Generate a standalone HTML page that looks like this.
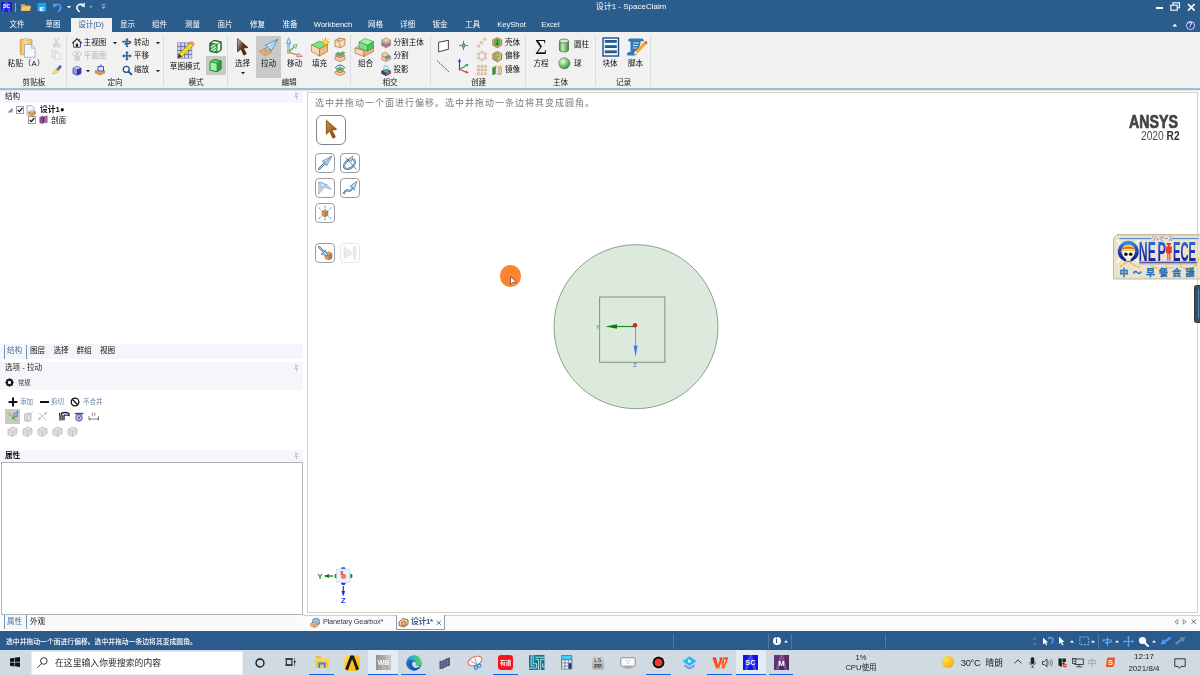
<!DOCTYPE html>
<html lang="zh-CN"><head><meta charset="utf-8"><title>设计1 - SpaceClaim</title>
<style>
*{margin:0;padding:0;box-sizing:border-box}
html,body{width:1200px;height:675px;overflow:hidden;background:#fff}
body{position:relative;font-family:"Liberation Sans","Noto Sans CJK SC",sans-serif;font-size:7.6px;color:#111}
.a{position:absolute}
.t{position:absolute;white-space:nowrap;line-height:10px;height:10px;font-size:7.6px}
.w{color:#fff}
.c{text-align:center}
.g{color:#9a9a9a}
svg{position:absolute;overflow:visible}
#root{position:absolute;left:0;top:0;width:1200px;height:675px;overflow:hidden;will-change:transform;background:#fff}
</style></head><body><div id="root">
<div class="a" style="left:0px;top:0px;width:1200px;height:32.3px;background:#2a5c8c"></div>
<div class="a" style="left:1.3px;top:1.5px;width:10.4px;height:10.2px;background:#1a1ae0"></div>
<svg style="left:1.3px;top:1.5px" width="10.4" height="10.2" viewBox="0 0 10.4 10.2"><path d="M4 0h2.400l3.500 10.200h-2.200l-2.500-7l-2.500 7h-2.200z" fill="#5a6af8" opacity="0.700"/></svg>
<div class="t w c" style="left:1.3px;top:2.2px;width:10.4px;font-size:5.6px;font-weight:bold;line-height:9px;letter-spacing:-0.2px">SC</div>
<div class="a" style="left:15px;top:3px;width:1px;height:9px;background:#8aa3bf"></div>
<svg style="left:20px;top:2px" width="12" height="10" viewBox="0 0 12 10"><path d="M1 2.2h3.5l1 1.2h4.8v5.4h-9.3z" fill="#e9a23b"/><path d="M1 8.8l1.6-4.3h8.6l-1.8 4.3z" fill="#fbc566"/></svg>
<svg style="left:37px;top:2px" width="10" height="10" viewBox="0 0 10 10"><rect x="0.5" y="0.8" width="8.6" height="8.4" fill="#1ea1ea"/><rect x="2.6" y="5.2" width="4.6" height="4" fill="#e8f4fc"/><rect x="5.3" y="6" width="1.3" height="2.6" fill="#1ea1ea"/></svg>
<svg style="left:52px;top:2px" width="11" height="10" viewBox="0 0 11 10"><path d="M2.2 3.2c2.4-1.6 5.6-1.2 6.4 1.6c0.5 2-0.6 3.5-2.2 4.6" fill="none" stroke="#4f9df0" stroke-width="1.7" stroke-linecap="round"/><path d="M1 1l0.4 4.6l4-1.6z" fill="#4f9df0"/></svg>
<svg style="left:66.5px;top:6px" width="4" height="3" viewBox="0 0 4 3"><path d="M0 0h4l-2 2.4z" fill="#fff"/></svg>
<svg style="left:75px;top:2px" width="11" height="10" viewBox="0 0 11 10"><path d="M8.4 3.2c-2.2-1.7-5.6-1.2-6.4 1.6c-0.5 2 0.6 3.5 2.2 4.6" fill="none" stroke="#e6edf5" stroke-width="1.7" stroke-linecap="round"/><path d="M10 0.6l-0.4 4.8l-4.2-1.6z" fill="#e6edf5"/></svg>
<svg style="left:88.5px;top:6px" width="4" height="3" viewBox="0 0 4 3"><path d="M0 0h4l-2 2.4z" fill="#7f9bb8"/></svg>
<svg style="left:100.5px;top:4px" width="5" height="6" viewBox="0 0 5 6"><path d="M0.4 0.6h4.2" stroke="#9fb5cc" stroke-width="0.9"/><path d="M0.2 2.4h4.6l-2.3 2.6z" fill="#9fb5cc"/></svg>
<div class="t c w" style="left:531.0px;top:2px;width:200px;font-size:8px">设计1 - SpaceClaim</div>
<div class="a" style="left:1156px;top:7px;width:7px;height:1.6px;background:#fff"></div>
<svg style="left:1170px;top:2px" width="11" height="10" viewBox="0 0 11 10"><rect x="3" y="0.8" width="6.4" height="5" fill="none" stroke="#fff" stroke-width="1.1"/><rect x="0.8" y="3.2" width="6.4" height="5" fill="#2b5b8c" stroke="#fff" stroke-width="1.1"/></svg>
<svg style="left:1187px;top:2.5px" width="9" height="9" viewBox="0 0 9 9"><path d="M1 1l6.6 6.6M7.6 1L1 7.6" stroke="#fff" stroke-width="1.6"/></svg>
<svg style="left:1172px;top:23px" width="6" height="4" viewBox="0 0 6 4"><path d="M0.4 3.4l2.4-2.6l2.4 2.6z" fill="#fff"/></svg>
<div class="a" style="left:1186px;top:20.5px;width:9px;height:9px;background:#2a3fa8;border-radius:50%;border:0.8px solid #dfe6f2"></div>
<div class="t w c" style="left:1186px;top:20px;width:9px;font-size:7px;font-weight:bold">?</div>
<div class="a" style="left:71px;top:18px;width:41px;height:14px;background:#f1f1f1"></div>
<div class="t c w" style="left:-23.0px;top:19.5px;width:80px;">文件</div>
<div class="t c w" style="left:13.0px;top:19.5px;width:80px;">草图</div>
<div class="t c " style="left:51.0px;top:19.5px;width:80px;color:#2b5b8c">设计(D)</div>
<div class="t c w" style="left:87.5px;top:19.5px;width:80px;">显示</div>
<div class="t c w" style="left:119.5px;top:19.5px;width:80px;">组件</div>
<div class="t c w" style="left:152.5px;top:19.5px;width:80px;">测量</div>
<div class="t c w" style="left:185.0px;top:19.5px;width:80px;">面片</div>
<div class="t c w" style="left:217.5px;top:19.5px;width:80px;">修复</div>
<div class="t c w" style="left:250.0px;top:19.5px;width:80px;">准备</div>
<div class="t c w" style="left:293.0px;top:19.5px;width:80px;">Workbench</div>
<div class="t c w" style="left:335.5px;top:19.5px;width:80px;">网格</div>
<div class="t c w" style="left:367.5px;top:19.5px;width:80px;">详细</div>
<div class="t c w" style="left:400.0px;top:19.5px;width:80px;">钣金</div>
<div class="t c w" style="left:432.5px;top:19.5px;width:80px;">工具</div>
<div class="t c w" style="left:471.5px;top:19.5px;width:80px;">KeyShot</div>
<div class="t c w" style="left:510.5px;top:19.5px;width:80px;">Excel</div>
<div class="a" style="left:0px;top:32px;width:1200px;height:56px;background:#f1f1f1"></div>
<div class="a" style="left:0px;top:87.5px;width:1200px;height:0.8px;background:#d3dbe3"></div>
<div class="a" style="left:0px;top:88.3px;width:1200px;height:1.4px;background:#a7bccd"></div>
<div class="a" style="left:0px;top:89.7px;width:1200px;height:0.8px;background:#dfe5ec"></div>
<div class="a" style="left:65.5px;top:35px;width:1px;height:51px;background:#dcdcdc"></div>
<div class="a" style="left:163.3px;top:35px;width:1px;height:51px;background:#dcdcdc"></div>
<div class="a" style="left:227.4px;top:35px;width:1px;height:51px;background:#dcdcdc"></div>
<div class="a" style="left:349.5px;top:35px;width:1px;height:51px;background:#dcdcdc"></div>
<div class="a" style="left:429.5px;top:35px;width:1px;height:51px;background:#dcdcdc"></div>
<div class="a" style="left:524.5px;top:35px;width:1px;height:51px;background:#dcdcdc"></div>
<div class="a" style="left:594.5px;top:35px;width:1px;height:51px;background:#dcdcdc"></div>
<div class="a" style="left:649.5px;top:35px;width:1px;height:51px;background:#dcdcdc"></div>
<div class="t c " style="left:-6.0px;top:78px;width:80px;color:#222">剪贴板</div>
<div class="t c " style="left:75.0px;top:78px;width:80px;color:#222">定向</div>
<div class="t c " style="left:156.0px;top:78px;width:80px;color:#222">模式</div>
<div class="t c " style="left:249.0px;top:78px;width:80px;color:#222">编辑</div>
<div class="t c " style="left:350.0px;top:78px;width:80px;color:#222">相交</div>
<div class="t c " style="left:438.5px;top:78px;width:80px;color:#222">创建</div>
<div class="t c " style="left:520.5px;top:78px;width:80px;color:#222">主体</div>
<div class="t c " style="left:583.5px;top:78px;width:80px;color:#222">记录</div>
<svg style="left:19px;top:36.5px" width="18" height="21" viewBox="0 0 18 21"><defs><linearGradient id="clp" x1="0" y1="0" x2="1" y2="0"><stop offset="0" stop-color="#e8b040"/><stop offset="0.400" stop-color="#fbe08a"/><stop offset="1" stop-color="#f0c058"/></linearGradient></defs>
<rect x="1.200" y="2.300" width="11.800" height="15.500" rx="1" fill="url(#clp)" stroke="#c99a3c" stroke-width="0.700"/>
<path d="M4 3q3-4.600 6.200 0z" fill="#e4e4e4" stroke="#a8a8a8" stroke-width="0.500"/>
<path d="M5.500 7.500h6.800l3.800 3.800v9h-10.600z" fill="#f6f6fc" stroke="#a0a3c4" stroke-width="0.800"/>
<path d="M12.300 7.500v3.800h3.800" fill="#dcdcec" stroke="#a0a3c4" stroke-width="0.600"/></svg>
<div class="t c " style="left:-13.7px;top:59.3px;width:80px;letter-spacing:0.45px">粘贴（A）</div>
<svg style="left:52px;top:37px" width="9" height="11" viewBox="0 0 9 11"><path d="M2.200 1l3.6 6.200M6.800 1l-3.600 6.200" stroke="#bdbdbd" stroke-width="0.9" fill="none"/><circle cx="2.600" cy="8.600" r="1.400" fill="none" stroke="#bdbdbd" stroke-width="0.9"/><circle cx="6.400" cy="8.600" r="1.400" fill="none" stroke="#bdbdbd" stroke-width="0.9"/></svg>
<svg style="left:51px;top:50px" width="11" height="10" viewBox="0 0 11 10"><path d="M1 0.800h4l1.600 1.600v5h-5.600z" fill="#ededed" stroke="#cfcfcf" stroke-width="0.7"/><path d="M4 2.800h4l1.600 1.600v5h-5.600z" fill="#f4f4f4" stroke="#cfcfcf" stroke-width="0.7"/></svg>
<svg style="left:51px;top:64px" width="11" height="11" viewBox="0 0 11 11"><path d="M9 1.200l1.600 1.400l-2.600 3.400l-2-1.600z" fill="#5a5fc0" stroke="#3a3f90" stroke-width="0.400"/><path d="M5.800 4.200l2.400 2l-0.900 1.100l-2.500-2z" fill="#8a8a8a"/><path d="M4.600 5.200l2.800 2.300q-2 3.300-6.800 2q2.600-1.200 4-4.300z" fill="#f4de58" stroke="#c9a83a" stroke-width="0.400"/></svg>
<svg style="left:72px;top:38px" width="10" height="10" viewBox="0 0 10 10"><path d="M1.600 5v4.200h6.800v-4.200" fill="#fff" stroke="#4038a8" stroke-width="1"/><path d="M0.300 5.300l4.700-4.500l4.700 4.500" fill="none" stroke="#3d2a1a" stroke-width="1.300"/><rect x="3.800" y="5.600" width="2.400" height="3.200" fill="#222"/><rect x="7" y="1" width="1.200" height="2.400" fill="#c0392b"/></svg>
<div class="t " style="left:83.6px;top:37.5px;">主视图</div>
<svg style="left:112.5px;top:42px" width="4" height="3" viewBox="0 0 4 3"><path d="M0 0h4l-2 2.3z" fill="#222"/></svg>
<svg style="left:72px;top:51px" width="10" height="10" viewBox="0 0 10 10"><ellipse cx="5" cy="3" rx="4.400" ry="2.200" fill="none" stroke="#c4c4c4" stroke-width="0.9"/><circle cx="5" cy="3" r="1.200" fill="#c4c4c4"/><path d="M2.500 6h5.500M2.500 7.600h5.500M2.500 9.200h5.500" stroke="#c4c4c4" stroke-width="1"/></svg>
<div class="t " style="left:83.6px;top:51.3px;color:#b4b4b4">平面图</div>
<svg style="left:72px;top:65px" width="10" height="11" viewBox="0 0 10 11"><path d="M1 3l4-1.800l4 1.800v5.500l-4 1.800l-4-1.800z" fill="#7a80e8" stroke="#23236e" stroke-width="0.600"/><path d="M1 3l4 1.600l4-1.600l-4-1.800z" fill="#b4b8f8"/><path d="M5 4.600v5.700l4-1.800v-5.500z" fill="#3434a8"/><path d="M1.800 4.200v4l2.400 1.100v-4z" fill="#a4a8f8" opacity="0.700"/></svg>
<svg style="left:85.5px;top:69.5px" width="4" height="3" viewBox="0 0 4 3"><path d="M0 0h4l-2 2.3z" fill="#222"/></svg>
<svg style="left:94px;top:64px" width="12" height="12" viewBox="0 0 12 12"><path d="M1 7l5-2l5 2l-5 2.400z" fill="#f0b873" stroke="#b87a3a" stroke-width="0.5"/><path d="M1 7v1.800l5 2.400l5-2.400v-1.800l-5 2.400z" fill="#d99a55" stroke="#b87a3a" stroke-width="0.5"/><path d="M4 2.500h5.500v4.500h-5.500z" fill="#dbe6ff" stroke="#3446b0" stroke-width="0.9"/><path d="M6.800 0.500v2" stroke="#3446b0" stroke-width="0.9"/></svg>
<svg style="left:122px;top:38px" width="10" height="9.5" viewBox="0 0 12 12" preserveAspectRatio="none"><path d="M6 0.800v10.400" stroke="#1f5a92" stroke-width="1.500"/><path d="M1.600 5.200c0-1.600 8.800-1.600 8.800 0.300c0 1.500-4 2-6.200 1.300" fill="none" stroke="#1f5a92" stroke-width="1.700"/><path d="M0 3.400l3.400 0.400l-2 2.800z" fill="#1f5a92"/><path d="M4 5l2 3.800l-3.300-0.600z" fill="#1f5a92"/><path d="M6 0l1.800 2.300h-3.600zM6 12l1.800-2.300h-3.600z" fill="#1f5a92"/></svg>
<div class="t " style="left:134px;top:37.5px;">转动</div>
<svg style="left:155.5px;top:42px" width="4" height="3" viewBox="0 0 4 3"><path d="M0 0h4l-2 2.3z" fill="#222"/></svg>
<svg style="left:122px;top:51.3px" width="9.8" height="9.8" viewBox="0 0 12 12" preserveAspectRatio="none"><path d="M6 1.500v9M1.500 6h9" stroke="#1f5a92" stroke-width="1.700"/><path d="M6 0l2.200 2.800h-4.400zM6 12l2.200-2.800h-4.400zM0 6l2.800-2.200v4.400zM12 6l-2.800-2.200v4.400z" fill="#1f5a92"/></svg>
<div class="t " style="left:134px;top:51.3px;">平移</div>
<svg style="left:121.5px;top:64.8px" width="10.3" height="10.3" viewBox="0 0 12 12" preserveAspectRatio="none"><circle cx="5" cy="5" r="3.500" fill="#fdfdfd" stroke="#1f4f86" stroke-width="1.500"/><path d="M7.600 7.600l3.400 3.400" stroke="#1f4f86" stroke-width="2.100" stroke-linecap="round"/></svg>
<div class="t " style="left:134px;top:64.5px;">缩放</div>
<svg style="left:155.5px;top:69.5px" width="4" height="3" viewBox="0 0 4 3"><path d="M0 0h4l-2 2.3z" fill="#222"/></svg>
<svg style="left:175px;top:40px" width="21" height="20" viewBox="0 0 21 20"><rect x="2.300" y="2.800" width="14.600" height="15.400" fill="#d4d4ea" stroke="#6a6a9a" stroke-width="0.500"/>
<path d="M2.300 6.600h14.600M2.300 10.500h14.600M2.300 14.400h14.600M5.900 2.800v15.400M9.600 2.800v15.400M13.300 2.800v15.400" stroke="#5a5a90" stroke-width="0.800"/>
<path d="M2.700 17.900l1.500-4.200l11-11l2.900 2.900l-11 11z" fill="#f5e420" stroke="#7a6a10" stroke-width="0.600"/>
<path d="M5.500 14.800l9.700-9.700" stroke="#c8b818" stroke-width="0.700"/>
<path d="M15.200 2.700l1.200-1.200q2.200 0.200 2.900 2.900l-1.200 1.200z" fill="#f4a890" stroke="#9a5a4a" stroke-width="0.500"/>
<path d="M2.700 17.900l1.500-4.200l2.700 2.700z" fill="#3a2a1a"/></svg>
<div class="t c " style="left:145.0px;top:61.5px;width:80px;">草图模式</div>
<div class="a" style="left:206px;top:55.5px;width:20px;height:19px;background:#c9c9c9"></div>
<svg style="left:209px;top:38.5px" width="13" height="15" viewBox="0 0 13 15"><path d="M1 4l4-2.500l7 1.300v8.400l-4 2.500l-7-1.400z" fill="#f4fff4" stroke="#156a25" stroke-width="1"/><path d="M1 4l7 1.300v8.400l-7-1.400z" fill="#2f9f3f"/><path d="M1.500 8.500l5.500-3.500M1.500 11.500l6-4M3.500 12.800l4.500-3" stroke="#e4ffe4" stroke-width="1.100"/><path d="M1 4l7 1.300l4-2.500M8 5.300v8.400" fill="none" stroke="#156a25" stroke-width="0.900"/><path d="M1 4l4-2.500l7 1.300v8.400l-4 2.500l-7-1.400z" fill="none" stroke="#156a25" stroke-width="1"/></svg>
<svg style="left:209px;top:57.5px" width="13" height="15" viewBox="0 0 13 15"><path d="M1 4l4-2.500l7 1.300v8.400l-4 2.500l-7-1.400z" fill="#a4f2aa" stroke="#1d8a2d" stroke-width="1"/><path d="M1 4l7 1.300l4-2.500l-7-1.300z" fill="#5ccf66" stroke="#1d8a2d" stroke-width="0.700"/><path d="M8 5.300v8.400l4-2.500v-8.400z" fill="#2fa040" stroke="#1d8a2d" stroke-width="0.700"/></svg>
<svg style="left:235px;top:37px" width="15" height="19" viewBox="0 0 15 19"><defs><linearGradient id="sa" x1="0" y1="0" x2="1" y2="1"><stop offset="0" stop-color="#d8ccc4"/><stop offset="0.450" stop-color="#6a3a24"/><stop offset="1" stop-color="#2a1006"/></linearGradient></defs><path d="M2.500 1.500l10.500 9l-4.600 0.600l2.900 5.800l-2.500 1.200l-2.800-6l-3.500 2.900z" fill="url(#sa)" stroke="#2a1408" stroke-width="0.600" stroke-linejoin="round"/></svg>
<div class="t c " style="left:202.5px;top:59.3px;width:80px;">选择</div>
<svg style="left:240.5px;top:72px" width="4" height="3" viewBox="0 0 4 3"><path d="M0 0h4l-2 2.3z" fill="#222"/></svg>
<div class="a" style="left:256px;top:35.7px;width:25px;height:41.9px;background:#c9c9c9"></div>
<svg style="left:258px;top:37px" width="21" height="20" viewBox="0 0 21 20"><path d="M1 14.300l7-3.700l6 4.200l-7.300 4.200z" fill="#eaa868" stroke="#c08040" stroke-width="0.500"/>
<path d="M19.800 2.300l-6.500 11.500l-1.800-2.600l-3.300 3.300l-1.400-1.400l3.300-3.300l-2.700-1.600z" fill="#c4e4f8" stroke="#2f7ab8" stroke-width="0.700" stroke-linejoin="round"/><path d="M19.800 2.300l-9 8.500" stroke="#4a9ad8" stroke-width="0.600"/></svg>
<div class="t c " style="left:228.5px;top:59.3px;width:80px;">拉动</div>
<svg style="left:284px;top:37px" width="20" height="20" viewBox="0 0 20 20"><path d="M4.600 15v-9" stroke="#2f86c0" stroke-width="2"/><path d="M4.600 15v-9" stroke="#c4e4f8" stroke-width="0.900"/><path d="M4.600 0.800l2.400 5.700h-4.800z" fill="#c4e4f8" stroke="#2f86c0" stroke-width="0.600"/>
<path d="M4.600 15l5.500-4.800" stroke="#3a9a5a" stroke-width="1.100"/><path d="M13 7.500l-1.300 4l-3-3.200z" fill="#c8f0d0" stroke="#2f8a4a" stroke-width="0.600"/>
<path d="M4.600 15.300l8.500 2.500" stroke="#d0505a" stroke-width="1"/><path d="M18.300 19.300l-5.500 0.600l1.200-3.600z" fill="#f8d8d8" stroke="#c0404a" stroke-width="0.600"/>
<circle cx="4.600" cy="15.300" r="1.400" fill="#f0d040" stroke="#a08020" stroke-width="0.500"/></svg>
<div class="t c " style="left:254.5px;top:59.3px;width:80px;">移动</div>
<svg style="left:310px;top:36px" width="21" height="21" viewBox="0 0 21 21"><path d="M1.500 9l8-4l8 3.500l-8 4.500z" fill="#7fe08a" stroke="#2f9a45" stroke-width="0.600"/>
<path d="M1.500 9v6.500l8 4.500v-7z" fill="#f7d9b5" stroke="#a8703a" stroke-width="0.700"/>
<path d="M9.500 13v7l8-4.500v-7z" fill="#eeb987" stroke="#a8703a" stroke-width="0.700"/>
<circle cx="15.500" cy="6" r="2.600" fill="#ffd21a"/>
<path d="M15.500 1.500v9M11 6h9M12.300 2.800l6.400 6.400M18.700 2.800l-6.400 6.400" stroke="#f39a12" stroke-width="0.900"/><circle cx="15.500" cy="6" r="2" fill="#ffdd33"/></svg>
<div class="t c " style="left:279.5px;top:59.3px;width:80px;">填充</div>
<svg style="left:334px;top:37px" width="12" height="11" viewBox="0 0 12 11"><path d="M1 3.500l4-2.500l6 1v6l-4 2.500l-6-1z" fill="#f7dcb9" stroke="#b07a45" stroke-width="0.800"/><path d="M5 1q-1.500 4 2 9.500M1 3.500q4 2 10-1.500" fill="none" stroke="#b07a45" stroke-width="0.700"/></svg>
<svg style="left:334px;top:50.5px" width="12" height="11" viewBox="0 0 12 11"><path d="M1 6l5-2l5 2v2.500l-5 2.300l-5-2.300z" fill="#f0c79a" stroke="#a8703a" stroke-width="0.600"/><path d="M1 4.500l5-2l5 2l-5 2.200z" fill="#e88a9a" stroke="#b0505a" stroke-width="0.500"/><path d="M1.500 2.800l3-1.600l2 1l2.500-1.500l2 1.300l-5 2.500z" fill="#4cc25a" stroke="#2a8a3a" stroke-width="0.500"/></svg>
<svg style="left:334px;top:64px" width="12" height="12" viewBox="0 0 12 12"><path d="M1 7.500l5-2l5 2v2l-5 2.300l-5-2.300z" fill="#f0c79a" stroke="#a8703a" stroke-width="0.600"/><path d="M2 5l4-2l4 2l-4 1.800z" fill="#4cc25a" stroke="#2a8a3a" stroke-width="0.500"/><path d="M1 4q5-6 10 0" fill="none" stroke="#3a58c0" stroke-width="1"/><path d="M2 7l4 1.600l4-1.600" fill="none" stroke="#d05060" stroke-width="0.800"/></svg>
<svg style="left:354px;top:37px" width="22" height="21" viewBox="0 0 22 21"><path d="M1 11l6-3l9 2l-6 3.500z" fill="#f7dcb9" stroke="#a8703a" stroke-width="0.600"/><path d="M1 11v5l9 3.500v-6z" fill="#f7d9b5" stroke="#a8703a" stroke-width="0.700"/><path d="M10 13.500v6l9.500-5v-5.500z" fill="#e8b582" stroke="#a8703a" stroke-width="0.700"/>
<path d="M5 5l6-3.500l8.500 3l-6 3.500z" fill="#a6f0ae" stroke="#2f9a45" stroke-width="0.600"/><path d="M5 5v6l8.500 3v-5.500z" fill="#7fe08a" stroke="#2f9a45" stroke-width="0.700"/><path d="M13.500 8.500v5.500l6-3.500v-6z" fill="#4cc25a" stroke="#2f9a45" stroke-width="0.700"/></svg>
<div class="t c " style="left:325.5px;top:59.3px;width:80px;">组合</div>
<svg style="left:381.2px;top:37px" width="10.3" height="11" viewBox="0 0 12 11" preserveAspectRatio="none"><path d="M0.800 7l5-2l5.400 2v1.500l-5.400 2.300l-5-2.300z" fill="#e86a6a" stroke="#8a5a5a" stroke-width="0.500"/><path d="M0.800 5l5-2l5.400 2v1.500l-5.400 2.200l-5-2.200z" fill="#5aa8e8" stroke="#4a6a9a" stroke-width="0.500"/><path d="M0.800 3l5-2.200l5.400 2.200v1.500l-5.400 2.200l-5-2.200z" fill="#f5cfa0" stroke="#a8703a" stroke-width="0.600"/><path d="M0.800 3l5 2.200l5.400-2.200" fill="none" stroke="#a8703a" stroke-width="0.500"/></svg>
<div class="t " style="left:393.5px;top:37.5px;">分割主体</div>
<svg style="left:381.2px;top:50.5px" width="10.3" height="11" viewBox="0 0 12 11" preserveAspectRatio="none"><path d="M0.800 6l5-1.500l5.400 2v2l-5.400 2.200l-5-2.200z" fill="#f0c79a" stroke="#a8703a" stroke-width="0.600"/><path d="M1.500 4.500l4-1.300l5 1.800l-4.500 2z" fill="#4cc25a" stroke="#2a8a3a" stroke-width="0.500"/><path d="M5.500 7l5.500-2.200v1.800l-5.500 2.200z" fill="#5aa8e8" stroke="#3a68a8" stroke-width="0.400"/><path d="M1 3l3.500-1.800l3.500 1.300v2l-3.500 1.500l-3.500-1.300z" fill="#f5cfa0" stroke="#a8703a" stroke-width="0.600"/></svg>
<div class="t " style="left:393.5px;top:51px;">分割</div>
<svg style="left:381.2px;top:64px" width="10.3" height="12" viewBox="0 0 12 12" preserveAspectRatio="none"><path d="M0.800 7l5-2l5.400 2v2.500l-5.400 2.200l-5-2.200z" fill="#3a3a8a" stroke="#22225a" stroke-width="0.600"/><path d="M2.200 7l3.600-1.400l4 1.400l-4 1.700z" fill="#4cc25a"/><path d="M5.800 8.700v2.800l5.400-2.200v-2.300z" fill="#c86a8a" opacity="0.700"/><path d="M3 5.500l1-4l3 0.500l2 3" fill="#e8f2fc" stroke="#5a9ad8" stroke-width="0.700"/></svg>
<div class="t " style="left:393.5px;top:64.5px;">投影</div>
<svg style="left:437px;top:39px" width="13" height="14" viewBox="0 0 13 14"><path d="M1.600 3.300l9.800-2v9l-9.800 2.500z" fill="#fff" stroke="#333" stroke-width="0.900"/></svg>
<svg style="left:436px;top:59px" width="14" height="14" viewBox="0 0 14 14"><path d="M1 1.500l12 11.500" stroke="#333" stroke-width="0.950" stroke-dasharray="1.600 1"/></svg>
<svg style="left:458px;top:40px" width="11" height="11" viewBox="0 0 11 11"><path d="M5.500 0.800v2.200M5.500 8v2.200M1 5.500h2.200M7.800 5.500h2.200" stroke="#2a8a3a" stroke-width="0.900"/><rect x="4.200" y="3.800" width="2.600" height="3.400" rx="0.700" fill="#7fd07a" stroke="#1d5a2d" stroke-width="0.800"/></svg>
<svg style="left:456px;top:58px" width="14" height="16" viewBox="0 0 14 16"><path d="M3.500 11.500v-9" stroke="#2a3ad8" stroke-width="1.100"/><path d="M3.500 0.500l1.700 3.200h-3.400z" fill="#2a3ad8"/><path d="M3.500 11.500l7-4.300" stroke="#2aa070" stroke-width="1.100"/><path d="M12.500 5.800l-1.300 3.200l-2.200-2.600z" fill="#2aa070"/><path d="M3.500 11.500l7 2.700" stroke="#e03a3a" stroke-width="1.100"/><path d="M12.800 15l-3.500 0.300l1-2.900z" fill="#e03a3a"/><circle cx="3.500" cy="11.500" r="1" fill="#c85a3a"/></svg>
<svg style="left:475px;top:37px" width="13" height="12" viewBox="0 0 13 12"><circle cx="3.6" cy="9.1" r="1.150" fill="#f8e0c4" stroke="#b88858" stroke-width="0.550"/><circle cx="6.5" cy="5.7" r="1.150" fill="#f8e0c4" stroke="#b88858" stroke-width="0.550"/><circle cx="9.7" cy="2.3" r="1.150" fill="#f8e0c4" stroke="#b88858" stroke-width="0.550"/></svg>
<svg style="left:475px;top:50.5px" width="13" height="12" viewBox="0 0 13 12"><circle cx="7" cy="1.2" r="1.150" fill="#f8e0c4" stroke="#b88858" stroke-width="0.550"/><circle cx="10.3" cy="3.1" r="1.150" fill="#f8e0c4" stroke="#b88858" stroke-width="0.550"/><circle cx="10.3" cy="6.9" r="1.150" fill="#f8e0c4" stroke="#b88858" stroke-width="0.550"/><circle cx="7" cy="8.8" r="1.150" fill="#f8e0c4" stroke="#b88858" stroke-width="0.550"/><circle cx="3.6" cy="6.9" r="1.150" fill="#f8e0c4" stroke="#b88858" stroke-width="0.550"/><circle cx="3.6" cy="3.1" r="1.150" fill="#f8e0c4" stroke="#b88858" stroke-width="0.550"/></svg>
<svg style="left:475px;top:64px" width="13" height="12" viewBox="0 0 13 12"><circle cx="3.5" cy="2.5" r="1.150" fill="#f8e0c4" stroke="#b88858" stroke-width="0.550"/><circle cx="7" cy="2.5" r="1.150" fill="#f8e0c4" stroke="#b88858" stroke-width="0.550"/><circle cx="10.5" cy="2.5" r="1.150" fill="#f8e0c4" stroke="#b88858" stroke-width="0.550"/><circle cx="3.5" cy="6" r="1.150" fill="#f8e0c4" stroke="#b88858" stroke-width="0.550"/><circle cx="7" cy="6" r="1.150" fill="#f8e0c4" stroke="#b88858" stroke-width="0.550"/><circle cx="10.5" cy="6" r="1.150" fill="#f8e0c4" stroke="#b88858" stroke-width="0.550"/><circle cx="3.5" cy="9.7" r="1.150" fill="#f8e0c4" stroke="#b88858" stroke-width="0.550"/><circle cx="7" cy="9.7" r="1.150" fill="#f8e0c4" stroke="#b88858" stroke-width="0.550"/><circle cx="10.5" cy="9.7" r="1.150" fill="#f8e0c4" stroke="#b88858" stroke-width="0.550"/></svg>
<svg style="left:492.3px;top:37px" width="10.5" height="11.5" viewBox="0 0 12 12" preserveAspectRatio="none"><path d="M1 3l5-2.300l5 2.300v5.500l-5 2.700l-5-2.700z" fill="#f0c79a" stroke="#8a5a2a" stroke-width="0.900"/><path d="M3 3.600l3-1.300l3 1.300v4.200l-3 1.700l-3-1.700z" fill="#5cc25a" stroke="#2a7a2a" stroke-width="0.700"/><path d="M6 3v5M4.600 6.400l1.400 1.800l1.400-1.800" stroke="#0a4a1a" stroke-width="0.800" fill="none"/></svg>
<div class="t " style="left:505px;top:37.5px;">壳体</div>
<svg style="left:492.3px;top:50.5px" width="10.5" height="11.5" viewBox="0 0 12 12" preserveAspectRatio="none"><path d="M1 3l5-2.300l5 2.300v5.500l-5 2.700l-5-2.700z" fill="#e8b582" stroke="#8a5a2a" stroke-width="0.900"/><path d="M3.200 3.800l5.500-1.600v3l-2.800 1v2.800l-2.700-1z" fill="#8ad07a" stroke="#4a7a3a" stroke-width="0.600"/><path d="M9 1l0.700 1.500l1.600 0.200l-1.200 1.100l0.300 1.600l-1.400-0.800l-1.400 0.800l0.300-1.600l-1.200-1.100l1.600-0.200z" fill="#ffb81a"/></svg>
<div class="t " style="left:505px;top:51px;">偏移</div>
<svg style="left:492.3px;top:64px" width="10.5" height="11.5" viewBox="0 0 12 12" preserveAspectRatio="none"><path d="M0.800 4l3.500-1.500v7.500l-3.500 1.200z" fill="#3f9a3a" stroke="#1f6a2a" stroke-width="0.600"/><path d="M4.300 2.500l3 1v7.300l-3-0.800z" fill="#eee" stroke="#888" stroke-width="0.500"/><path d="M8.300 5l2.500-1v6.500l-2.500 1z" fill="#f5dcc0" stroke="#a8703a" stroke-width="0.600"/><path d="M9.400 0.500l0.700 1.500l1.600 0.200l-1.200 1.100l0.300 1.600l-1.400-0.800l-1.400 0.800l0.300-1.600l-1.200-1.100l1.600-0.200z" fill="#ffb81a"/></svg>
<div class="t " style="left:505px;top:64.5px;">镜像</div>
<div class="t c" style="left:531px;top:34.8px;width:20px;height:24px;line-height:24px;font-size:20.5px;font-family:'Liberation Serif',serif;color:#111">Σ</div>
<div class="t c " style="left:501.0px;top:59.3px;width:80px;">方程</div>
<svg style="left:558px;top:37.5px" width="12" height="15" viewBox="0 0 12 15"><defs><linearGradient id="cg" x1="0" x2="1"><stop offset="0" stop-color="#4f9a45"/><stop offset="0.350" stop-color="#c8ecc0"/><stop offset="1" stop-color="#3f8a3a"/></linearGradient></defs><path d="M1.500 3v9c0 2.600 9 2.600 9 0v-9z" fill="url(#cg)" stroke="#3a6a35" stroke-width="0.700"/><ellipse cx="6" cy="3" rx="4.500" ry="2" fill="#d4efcf" stroke="#3a6a35" stroke-width="0.700"/></svg>
<div class="t " style="left:574px;top:40px;">圆柱</div>
<svg style="left:558px;top:57.2px" width="12.6" height="12.6" viewBox="0 0 14 14" preserveAspectRatio="none"><defs><radialGradient id="sg" cx="0.380" cy="0.350" r="0.700"><stop offset="0" stop-color="#f0fbea"/><stop offset="0.450" stop-color="#8fd083"/><stop offset="1" stop-color="#2f8a35"/></radialGradient></defs><circle cx="7" cy="7" r="6.300" fill="url(#sg)" stroke="#2f7a35" stroke-width="0.500"/></svg>
<div class="t " style="left:574px;top:58.5px;">球</div>
<svg style="left:601.5px;top:36.5px" width="18" height="20" viewBox="0 0 18 20"><rect x="1" y="1" width="15.500" height="18" fill="#f4f8fc" stroke="#1f4f86" stroke-width="1.400"/><rect x="2.800" y="3" width="12" height="2.800" fill="#245a94"/><rect x="2.800" y="8.200" width="12" height="2.800" fill="#245a94"/><rect x="2.800" y="13.400" width="12" height="2.800" fill="#245a94"/></svg>
<div class="t c " style="left:570.0px;top:59.3px;width:80px;">块体</div>
<svg style="left:625.5px;top:36.5px" width="21" height="21" viewBox="0 0 21 21"><path d="M4 1.500h11.500q2.500 0.300 2.200 2.800h-3.200v2.200l-3 8.500q-0.600 3.500-4 3.500h-6q-1.300-2.400 1-3.500h2v-10.500q-3 0-2.200-2z" fill="#2f78b4"/>
<path d="M7 6h6M7 8.500h5M7 11h3.500" stroke="#cfe4f5" stroke-width="1"/>
<path d="M8 17.500l1.200-3.600l9-9l2.300 2.300l-9 9z" fill="#f4a62a"/><path d="M18.200 4.900l1-1q1.500 0 2.300 2.300l-1 1z" fill="#e04a3a"/><path d="M8 17.500l1.200-3.600l2.300 2.400z" fill="#fff"/></svg>
<div class="t c " style="left:595.5px;top:59.3px;width:80px;">脚本</div>
<div class="a" style="left:0px;top:90.5px;width:303px;height:12.5px;background:#f5f6fb"></div>
<div class="t " style="left:5px;top:91.8px;color:#222">结构</div>
<svg style="left:294px;top:93px" width="5" height="7" viewBox="0 0 5 7"><path d="M1.200 0.500h2.600M1.700 0.500v3M3.300 0.500v3M0.600 3.600h3.800M2.500 3.600v3" stroke="#9ea3ac" stroke-width="0.550" fill="none"/></svg>
<svg style="left:7px;top:107px" width="6" height="6" viewBox="0 0 6 6"><path d="M0.500 5.500h5v-5z" fill="#8a8a8a"/></svg>
<svg style="left:16px;top:106px" width="8" height="8" viewBox="0 0 8 8"><rect x="0.400" y="0.400" width="7.200" height="7.200" fill="#fdfdfd" stroke="#8e8e8e" stroke-width="0.800"/><path d="M1.700 3.800l1.700 1.900l3-3.700" fill="none" stroke="#111" stroke-width="1.200"/></svg>
<svg style="left:26px;top:104.5px" width="10" height="11" viewBox="0 0 10 11"><path d="M1 0.600h4.800l2.400 2.400v7.400h-7.200z" fill="#f7f8ff" stroke="#8a90c0" stroke-width="0.700"/><path d="M2.500 7l3.500-1.500l3.500 1.300l-3.500 1.700z" fill="#f5cfa0" stroke="#a8703a" stroke-width="0.500"/><path d="M2.500 7v1.700l3.500 1.700l3.500-1.700v-1.900l-3.500 1.700z" fill="#e09a4a" stroke="#a8703a" stroke-width="0.500"/></svg>
<div class="t" style="left:40px;top:105.4px;font-weight:bold;color:#111;font-size:7.8px">设计1<span style="font-size:7.5px;position:relative;top:-0.3px">●</span></div>
<svg style="left:28px;top:116px" width="8" height="8" viewBox="0 0 8 8"><rect x="0.400" y="0.400" width="7.200" height="7.200" fill="#fdfdfd" stroke="#8e8e8e" stroke-width="0.800"/><path d="M1.700 3.800l1.700 1.900l3-3.700" fill="none" stroke="#111" stroke-width="1.200"/></svg>
<svg style="left:38.5px;top:115px" width="9" height="10" viewBox="0 0 9 10"><path d="M0.800 2.200l3-1v7.600l-3-1.200z" fill="#9a4a9a" stroke="#6a2a6a" stroke-width="0.500"/><path d="M3.800 1.200l1.200 0.600v5.200l-1.200 1.800z" fill="#5a1a5a"/><path d="M5 1.800l3.200-1v6.600l-3.200 0.400z" fill="#b070b0" stroke="#6a2a6a" stroke-width="0.500"/></svg>
<div class="t " style="left:51px;top:115.5px;">剖面</div>
<div class="a" style="left:0px;top:344px;width:303px;height:15px;background:#f5f6fb"></div>
<div class="a" style="left:3.5px;top:344.5px;width:23px;height:14px;background:#f6f6f8;border-left:1px solid #6f97bb;border-right:1px solid #6f97bb"></div>
<div class="t " style="left:7px;top:346px;color:#3f76a8">结构</div>
<div class="t " style="left:30px;top:346px;">图层</div>
<div class="t " style="left:53.5px;top:346px;">选择</div>
<div class="t " style="left:76.5px;top:346px;">群组</div>
<div class="t " style="left:100px;top:346px;">视图</div>
<div class="a" style="left:0px;top:361.5px;width:303px;height:13px;background:#f5f6fb"></div>
<div class="t " style="left:5px;top:363px;color:#222">选项 - 拉动</div>
<svg style="left:294px;top:364.5px" width="5" height="7" viewBox="0 0 5 7"><path d="M1.200 0.500h2.600M1.700 0.500v3M3.300 0.500v3M0.600 3.600h3.800M2.500 3.600v3" stroke="#9ea3ac" stroke-width="0.550" fill="none"/></svg>
<div class="a" style="left:0px;top:375px;width:303px;height:15px;background:#f5f6fb"></div>
<svg style="left:5px;top:377.7px" width="9" height="9" viewBox="0 0 9 9"><circle cx="4.500" cy="4.500" r="2.600" fill="none" stroke="#111" stroke-width="1.900"/><path d="M4.500 0.300v1.400M4.500 7.300v1.400M0.300 4.500h1.400M7.300 4.500h1.400M1.500 1.500l1 1M6.500 6.500l1 1M7.500 1.500l-1 1M2.500 6.500l-1 1" stroke="#111" stroke-width="1.500"/></svg>
<div class="t " style="left:18px;top:377.8px;font-size:6.300px;color:#333">常规</div>
<svg style="left:8px;top:396.5px" width="10" height="10" viewBox="0 0 10 10"><path d="M5 0.600v8.800M0.600 5h8.800" stroke="#111" stroke-width="2"/></svg>
<div class="t " style="left:20px;top:396.5px;font-size:6.500px;color:#5f7f9f">添加</div>
<div class="a" style="left:39.5px;top:400.5px;width:9px;height:2px;background:#111"></div>
<div class="t " style="left:51px;top:396.5px;font-size:6.500px;color:#5f7f9f">剪切</div>
<svg style="left:70px;top:396.5px" width="10" height="10" viewBox="0 0 10 10"><circle cx="5" cy="5" r="3.800" fill="none" stroke="#111" stroke-width="1.300"/><path d="M2.300 2.300l5.400 5.400" stroke="#111" stroke-width="1.300"/></svg>
<div class="t " style="left:83px;top:396.5px;font-size:6.500px;color:#5f7f9f">不合并</div>
<div class="a" style="left:5px;top:409px;width:15px;height:15px;background:#c9c9c9"></div>
<svg style="left:7px;top:410px" width="12" height="13" viewBox="0 0 12 13"><path d="M1.500 3l8 8" stroke="#b8d84a" stroke-width="2.200"/><path d="M1.500 3l8 8" stroke="#6a9a2a" stroke-width="0.500"/><path d="M10.800 1l-1 6l-1.600-0.600l-2.200 3l-0.800-0.600l2.200-3l-1.300-1.200z" fill="#8fc0e8" stroke="#2f5a9a" stroke-width="0.600"/></svg>
<svg style="left:22.5px;top:410.5px" width="10" height="11" viewBox="0 0 10 11"><path d="M1.500 3l4-1l2.500 1v6.500l-4 1l-2.500-1z" fill="#e4e4e4" stroke="#a8a8a8" stroke-width="0.700"/><path d="M4 4v6.500M4 4l4-1M9.500 0.500l-2.500 3" stroke="#a8a8a8" stroke-width="0.600" fill="none"/></svg>
<svg style="left:37px;top:411px" width="11" height="10" viewBox="0 0 11 10"><path d="M1 9l9-8M2 2l7 7" stroke="#b0b0b0" stroke-width="0.800"/><path d="M10 1l-3 1l2 2z" fill="#b8b8b8"/><path d="M1 9l3-1l-2-2z" fill="#b8b8b8"/></svg>
<svg style="left:58px;top:411.5px" width="12" height="9" viewBox="0 0 12 9"><path d="M1.500 1q1 4 0.500 7.500M3.500 0.800q1 4 0.500 7.700" stroke="#222" stroke-width="1.300" fill="none"/><path d="M3.500 1.200q4-1.500 7.500 0.300v2q-3.500-1.200-5 0v4.800" fill="none" stroke="#222" stroke-width="1.300"/><path d="M6 2h4.500v1h-4.500z" fill="#9a8ad0"/></svg>
<svg style="left:74px;top:411.5px" width="10" height="10" viewBox="0 0 10 10"><path d="M0.800 0.800h8.400v1.600h-8.400z" fill="#2a4a9a"/><circle cx="5" cy="5.800" r="3.400" fill="#a8b8f0" stroke="#3a4ab0" stroke-width="0.800"/><path d="M5 5.800l2-2.500" stroke="#d0303a" stroke-width="1"/><circle cx="5" cy="5.800" r="0.900" fill="#d0303a"/></svg>
<svg style="left:88px;top:411.5px" width="12" height="9" viewBox="0 0 12 9"><path d="M1 4v4.500M10.500 4v4.500M1 7h9.500" stroke="#555" stroke-width="0.700" fill="none"/><path d="M4.500 0.800v3.500M6.800 0.800v3.500M4 1.600l0.500-0.800M6.300 1.600l0.500-0.800" stroke="#555" stroke-width="0.600"/><path d="M1 7l1.500-0.800v1.600zM10.500 7l-1.500-0.800v1.600z" fill="#555"/></svg>
<svg style="left:7px;top:425.5px" width="11" height="11" viewBox="0 0 11 11"><path d="M1 3.500l4.500-2.500l4.500 1.800v5l-4.500 2.700l-4.500-1.800z" fill="#e2e2e2" stroke="#b4b4b4" stroke-width="0.700"/><path d="M1 3.500l4.500 1.800l4.500-2.500M5.500 5.300v5.200" fill="none" stroke="#b4b4b4" stroke-width="0.600"/><path d="M1 6l4.500 1.800l4.500-2.500" fill="none" stroke="#c4c4c4" stroke-width="0.500"/></svg>
<svg style="left:22px;top:425.5px" width="11" height="11" viewBox="0 0 11 11"><path d="M1 3.500l4.500-2.500l4.500 1.800v5l-4.500 2.700l-4.500-1.800z" fill="#e2e2e2" stroke="#b4b4b4" stroke-width="0.700"/><path d="M1 3.500l4.500 1.800l4.500-2.500M5.500 5.300v5.200" fill="none" stroke="#b4b4b4" stroke-width="0.600"/><path d="M1 6l4.500 1.800l4.500-2.500" fill="none" stroke="#c4c4c4" stroke-width="0.500"/></svg>
<svg style="left:37px;top:425.5px" width="11" height="11" viewBox="0 0 11 11"><path d="M1 3.500l4.500-2.500l4.500 1.800v5l-4.500 2.700l-4.500-1.800z" fill="#e2e2e2" stroke="#b4b4b4" stroke-width="0.700"/><path d="M1 3.500l4.500 1.800l4.500-2.500M5.500 5.300v5.200" fill="none" stroke="#b4b4b4" stroke-width="0.600"/><path d="M1 6l4.500 1.800l4.500-2.500" fill="none" stroke="#c4c4c4" stroke-width="0.500"/></svg>
<svg style="left:52px;top:425.5px" width="11" height="11" viewBox="0 0 11 11"><path d="M1 3.500l4.500-2.500l4.500 1.800v5l-4.500 2.700l-4.500-1.800z" fill="#e2e2e2" stroke="#b4b4b4" stroke-width="0.700"/><path d="M1 3.500l4.500 1.800l4.500-2.500M5.500 5.300v5.200" fill="none" stroke="#b4b4b4" stroke-width="0.600"/><path d="M1 6l4.500 1.800l4.500-2.500" fill="none" stroke="#c4c4c4" stroke-width="0.500"/></svg>
<svg style="left:67px;top:425.5px" width="11" height="11" viewBox="0 0 11 11"><path d="M1 3.500l4.500-2.500l4.500 1.800v5l-4.500 2.700l-4.500-1.800z" fill="#e2e2e2" stroke="#b4b4b4" stroke-width="0.700"/><path d="M1 3.500l4.500 1.800l4.500-2.500M5.500 5.300v5.200" fill="none" stroke="#b4b4b4" stroke-width="0.600"/><path d="M1 6l4.500 1.800l4.500-2.500" fill="none" stroke="#c4c4c4" stroke-width="0.500"/></svg>
<div class="a" style="left:0px;top:449.5px;width:303px;height:12.5px;background:#f5f6fb"></div>
<div class="t " style="left:5px;top:450.5px;color:#111;font-weight:bold">属性</div>
<svg style="left:294px;top:452.5px" width="5" height="7" viewBox="0 0 5 7"><path d="M1.200 0.500h2.600M1.700 0.500v3M3.300 0.500v3M0.600 3.600h3.800M2.500 3.600v3" stroke="#9ea3ac" stroke-width="0.550" fill="none"/></svg>
<div class="a" style="left:1px;top:462px;width:302px;height:152.5px;background:#fff;border:1px solid #b4b4b4"></div>
<div class="a" style="left:0px;top:615px;width:303px;height:14.5px;background:#fafafc"></div>
<div class="a" style="left:3.5px;top:615px;width:23px;height:14px;background:#f6f6f8;border-left:1px solid #6f97bb;border-right:1px solid #6f97bb"></div>
<div class="t " style="left:7px;top:616.5px;color:#3f76a8">属性</div>
<div class="t " style="left:30px;top:616.5px;">外观</div>
<div class="a" style="left:306.5px;top:92px;width:891.5px;height:521px;background:#fff;border:1.500px solid #d3d3c3"></div>
<div class="t " style="left:315px;top:97.5px;color:#7a7a7a;font-size:9px;letter-spacing:1px;line-height:11px;height:11px">选中并拖动一个面进行偏移。选中并拖动一条边将其变成圆角。</div>
<div class="a" style="left:316px;top:114.5px;width:30px;height:30px;background:#fff;border:1px solid #80868c;border-radius:6px;border-width:1.200px"></div>
<svg style="left:321px;top:118px" width="20" height="23" viewBox="0 0 20 23"><defs><linearGradient id="cur" x1="0" y1="0" x2="1" y2="1"><stop offset="0" stop-color="#c89050"/><stop offset="1" stop-color="#7a4c20"/></linearGradient></defs><path d="M5 1.500l11.500 10l-5 0.800l3.300 6.800l-3 1.500l-3.200-7l-3.600 3.300z" fill="#e8a23c" stroke="#f0b050" stroke-width="0.700" stroke-linejoin="round"/><path d="M5.600 2.900l9.500 8.300l-4.500 0.700l3.400 7l-2 1l-3.300-7.200l-3.100 2.900z" fill="url(#cur)" stroke="#5a3410" stroke-width="0.600" stroke-linejoin="round"/></svg>
<div class="a" style="left:314.7px;top:152.7px;width:20px;height:20px;background:#fff;border:1px solid #9a9ea2;border-radius:4px;"></div>
<svg style="left:316.7px;top:154.7px" width="16" height="16" viewBox="0 0 16 16"><path d="M1.500 14.500l7-7" stroke="#3a6a9a" stroke-width="1.900"/><path d="M1.500 14.500l7-7" stroke="#a8d0ec" stroke-width="1"/><path d="M15 1l-5.300 9.800l-1.700-2.800l-2.800-1.700z" fill="#b4d8f0" stroke="#3a6a9a" stroke-width="0.600" stroke-linejoin="round"/><path d="M15 1l-7 7" stroke="#3a6a9a" stroke-width="0.400"/></svg>
<div class="a" style="left:339.7px;top:152.7px;width:20px;height:20px;background:#fff;border:1px solid #9a9ea2;border-radius:4px;"></div>
<svg style="left:341.7px;top:154.7px" width="16" height="16" viewBox="0 0 16 16"><ellipse cx="7.500" cy="9" rx="6.200" ry="4" transform="rotate(-38 7.500 9)" fill="none" stroke="#3a6a9a" stroke-width="2"/><ellipse cx="7.500" cy="9" rx="6.200" ry="4" transform="rotate(-38 7.500 9)" fill="none" stroke="#9ac4e8" stroke-width="1"/><path d="M4 3l10.500 11.500" stroke="#555" stroke-width="0.800"/><path d="M11 0.800l-1.600 6l-1.500-1.700l-2-0.800z" fill="#b4d8f0" stroke="#3a6a9a" stroke-width="0.500"/></svg>
<div class="a" style="left:314.7px;top:177.7px;width:20px;height:20px;background:#fff;border:1px solid #9a9ea2;border-radius:4px;"></div>
<svg style="left:316.7px;top:179.7px" width="16" height="16" viewBox="0 0 16 16"><path d="M1.500 2.500v12l6-7z" fill="#c8ccd2" stroke="#9a9ea4" stroke-width="0.400"/><path d="M1.500 2.300q4 0 7 2.800" fill="none" stroke="#8ab8dc" stroke-width="1.500"/><path d="M14.500 9.500l-7.500-2.800l1.800-0.800l0.300-2.200z" fill="#b4d8f0" stroke="#5a8ab8" stroke-width="0.500"/></svg>
<div class="a" style="left:339.7px;top:177.7px;width:20px;height:20px;background:#fff;border:1px solid #9a9ea2;border-radius:4px;"></div>
<svg style="left:341.7px;top:179.7px" width="16" height="16" viewBox="0 0 16 16"><path d="M1.500 14q2.500-4.500 5-3.500t4-3" fill="none" stroke="#3a6a9a" stroke-width="1.900"/><path d="M1.500 14q2.500-4.500 5-3.500t4-3" fill="none" stroke="#a8d0ec" stroke-width="0.900"/><path d="M15 1l-2.800 9.300l-1.500-2.700l-2.800-1.300z" fill="#b4d8f0" stroke="#3a6a9a" stroke-width="0.600" stroke-linejoin="round"/></svg>
<div class="a" style="left:314.7px;top:202.7px;width:20px;height:20px;background:#fff;border:1px solid #9a9ea2;border-radius:4px;"></div>
<svg style="left:316.7px;top:204.7px" width="16" height="16" viewBox="0 0 16 16"><path d="M8 1v4M8 11.500v3.500M2 3l3 2.800M14 3l-3 2.800M2 13.500l3-2.500M14 13.500l-3-2.500" stroke="#8ab8dc" stroke-width="0.800"/><path d="M8 0.500l-0.800 1.500h1.600zM8 15.500l-0.800-1.500h1.600zM1.500 2.500l1.700 0.300l-1.100 1.200zM14.500 2.500l-1.700 0.300l1.100 1.200zM1.500 14l1.700-0.300l-1.100-1.200zM14.500 14l-1.700-0.300l1.100-1.200z" fill="#6a9ac8"/><path d="M5 6.300l3-1.300l3 1.300v4l-3 1.500l-3-1.500z" fill="#d8a068" stroke="#8a5a2a" stroke-width="0.500"/><path d="M5 6.300l3 1.300l3-1.300M8 7.600v4.200" fill="none" stroke="#8a5a2a" stroke-width="0.500"/><path d="M8 7.600v4.200l3-1.500v-4z" fill="#b87838" opacity="0.600"/></svg>
<div class="a" style="left:314.7px;top:243px;width:20px;height:20px;background:#fff;border:1px solid #9a9ea2;border-radius:4px;"></div>
<svg style="left:316.7px;top:245px" width="16" height="16" viewBox="0 0 16 16"><path d="M8 8.300l3.500-1.500l3.500 1.500v5l-3.500 1.700l-3.500-1.700z" fill="#e0a868" stroke="#8a5a2a" stroke-width="0.500"/><path d="M11.500 9.800v5.200l3.500-1.700v-5z" fill="#b87838"/><path d="M1.500 1.500l6 6" stroke="#2a5a9a" stroke-width="2.300"/><path d="M1.500 1.500l6 6" stroke="#a8d0ec" stroke-width="1.100"/><path d="M11 11.300l-7-2.300l2.800-1.200l1.400-3z" fill="#b4d8f0" stroke="#2a5a9a" stroke-width="0.600" stroke-linejoin="round"/></svg>
<div class="a" style="left:339.7px;top:243px;width:20px;height:20px;background:#fff;border:1px solid #e4e6e8;border-radius:4px;"></div>
<svg style="left:341.7px;top:245px" width="16" height="16" viewBox="0 0 16 16"><path d="M2 2v12l9-6z" fill="#e4eeee" stroke="#d4dede" stroke-width="0.600"/><rect x="11.500" y="1.500" width="2.500" height="13" fill="#e4eeee" stroke="#d4dede" stroke-width="0.500"/></svg>
<div class="a" style="left:499.6px;top:265.1px;width:21.8px;height:21.8px;background:#fd8232;border-radius:50%"></div>
<svg style="left:509px;top:275px" width="9" height="11" viewBox="0 0 9 11"><path d="M1.500 1.500v8.200l2.200-2.200l4 -0.400z" fill="#f4f4f4" stroke="#6a3a2a" stroke-width="0.700" stroke-linejoin="round"/></svg>
<svg style="left:545px;top:236px" width="182" height="182" viewBox="0 0 182 182"><circle cx="91" cy="90.700" r="82" fill="#dceadd" stroke="#7f977f" stroke-width="0.900"/>
<rect x="54.700" y="61" width="65.200" height="65.200" fill="none" stroke="#6f776f" stroke-width="0.800"/>
<path d="M90 90.500h-20" stroke="#1f8a1f" stroke-width="1.200"/><path d="M60.500 90.500l11.500-2.200v4.400z" fill="#0f7a0f"/>
<path d="M90.600 91v20" stroke="#5a8af0" stroke-width="0.900"/><path d="M90.600 121l-2-11.500h4z" fill="#4a7ae8"/>
<circle cx="90" cy="89.300" r="2.200" fill="#e01f1f"/>
<text x="51" y="93" font-size="5.500" fill="#2f8a2f" font-family="Liberation Sans, sans-serif">Y</text>
<text x="88.300" y="130.600" font-size="5.500" fill="#4a5ae0" font-family="Liberation Sans, sans-serif">Z</text></svg>
<div class="t" style="left:1129.3px;top:112px;height:20px;line-height:20px;font-size:18px;font-weight:bold;color:#444;-webkit-text-stroke:0.7px #444;transform:scaleX(0.790);transform-origin:0 0">ANSYS</div>
<div class="t" style="left:1140.500px;top:129.600px;height:13px;line-height:13px;font-size:12px;color:#4a4a4a;transform:scaleX(0.850);transform-origin:0 0">2020 <b style="color:#333">R2</b></div>
<svg style="left:314px;top:564px" width="44" height="44" viewBox="0 0 44 44"><text x="3.500" y="15" font-size="7.500" font-weight="bold" fill="#1a8a1a" font-family="Liberation Sans, sans-serif">Y</text>
<path d="M11 12h8" stroke="#0a7a0a" stroke-width="1.200"/><path d="M10 12l5-2v4z" fill="#0a7a0a"/>
<ellipse cx="22" cy="12" rx="1.500" ry="2.200" fill="#1f8f1f"/><ellipse cx="37" cy="12" rx="1.500" ry="2.200" fill="#1f8f1f"/>
<ellipse cx="29.300" cy="4.500" rx="2.200" ry="1.300" fill="#2a2ae8"/><ellipse cx="29.300" cy="19.500" rx="2.200" ry="1.500" fill="#2a2ae8"/>
<rect x="22.500" y="5" width="13.500" height="13.500" fill="#e6f2f4" fill-opacity="0.920" stroke="#c4d4dc" stroke-width="0.600"/>
<circle cx="29.500" cy="12.300" r="2.600" fill="#f07a7a"/>
<text x="26" y="10.500" font-size="6.500" font-weight="bold" fill="#e82a2a" font-family="Liberation Sans, sans-serif">x</text>
<path d="M29.300 22v8" stroke="#2a2ae8" stroke-width="1.200"/><path d="M29.300 32.500l-1.900-5.500h3.800z" fill="#2a2ae8"/>
<text x="27" y="39.300" font-size="7.500" font-weight="bold" fill="#2a2ae8" font-family="Liberation Sans, sans-serif">Z</text></svg>
<div class="a" style="left:1194px;top:284.5px;width:8px;height:38px;background:#3d4d5c;border-radius:2.500px;border:1px solid #2a3640"></div>
<div class="a" style="left:1197.5px;top:289px;width:1px;height:29px;background:#4a8ab8"></div>
<svg style="left:1112.5px;top:233.5px" width="88" height="45" viewBox="0 0 88 45"><defs><linearGradient id="og" x1="0" y1="0" x2="0" y2="1"><stop offset="0" stop-color="#3a8ae0"/><stop offset="0.500" stop-color="#1a3ab8"/><stop offset="1" stop-color="#141a7a"/></linearGradient></defs>
<path d="M4 0.500h84v44.500h-87.500v-40.500z" fill="#e9e2cf" stroke="#b4aa8c" stroke-width="0.800"/>
<path d="M5 1.800h83" stroke="#a89c7c" stroke-width="0.500" stroke-dasharray="1 1"/>
<path d="M6.500 4.600h32M59 4.600h27" stroke="#3a7ac8" stroke-width="0.900"/>
<text x="49" y="6.100" font-size="4.200" fill="#4a4ab8" text-anchor="middle" font-family="Liberation Sans, Noto Sans CJK JP, sans-serif">ワンピース</text>
<path d="M4.500 7l21 21M25.500 7l-21 21" stroke="#f8f8f4" stroke-width="2.400" stroke-linecap="round"/>
<circle cx="15.300" cy="17.300" r="8.700" fill="none" stroke="url(#og)" stroke-width="3.600"/>
<circle cx="15.300" cy="20.300" r="5.200" fill="#f8f8f4"/><rect x="13" y="23.500" width="4.600" height="3.600" rx="1" fill="#f0f0ea"/>
<circle cx="12.900" cy="20.300" r="1.800" fill="#111"/><circle cx="17.700" cy="20.300" r="1.800" fill="#111"/>
<path d="M9 15q6.300-8 12.600 0z" fill="#f8c81a"/><path d="M9.500 14q5.800-2 11.600 0l0.500 1.500q-6.300-2-12.600 0z" fill="#e84a2a"/><path d="M4.800 18q10.500-4.500 21 0q-10.500-2.500-21 0z" fill="#f0b81a"/>
<text x="25.800" y="26.700" font-size="28" font-weight="bold" fill="url(#og)" font-family="Liberation Sans, sans-serif" textLength="17" lengthAdjust="spacingAndGlyphs">NE</text>
<text x="44.500" y="26.700" font-size="28" font-weight="bold" fill="url(#og)" font-family="Liberation Sans, sans-serif" textLength="8.500" lengthAdjust="spacingAndGlyphs">P</text>
<text x="60" y="26.700" font-size="28" font-weight="bold" fill="url(#og)" font-family="Liberation Sans, sans-serif" textLength="23" lengthAdjust="spacingAndGlyphs">ECE</text>
<path d="M53.600 9h4.400v1.800h-1v1.700h1.700v6.500h-1.300v7.600h-1.100v-6.800h-0.900v6.800h-1.100v-7.600h-1.300v-6.500h1.700v-1.700h-1.100z" fill="#e83a2a"/>
<path d="M26 28.300h58" stroke="#2a2a8a" stroke-width="1.100"/><path d="M26 29.800h58" stroke="#3a4ab0" stroke-width="0.500"/>
<path d="M7 33q4-3.500 7-5M17 28.500q5 4 11 5M38 31.500q4 3 8 2.500M52 32q4 2.500 9 1.500M67 31.500q6 5 14 1.500q4-3 4.500-9" fill="none" stroke="#f0b81a" stroke-width="1.200" stroke-dasharray="3 0.800"/>
<text x="6.500" y="42.300" font-size="9" font-weight="bold" fill="#2a8acc" stroke="#1a5a9c" stroke-width="0.300" font-family="Liberation Sans, Noto Sans CJK SC, sans-serif" textLength="75" lengthAdjust="spacing">中〜早餐会議</text></svg>
<div class="a" style="left:1196.5px;top:233px;width:1.5px;height:46px;background:#d3d3c3;opacity:0.700"></div>
<div class="a" style="left:303px;top:615px;width:897px;height:1px;background:#cfcfcf"></div>
<div class="a" style="left:303px;top:616px;width:897px;height:14.5px;background:#fbfbfd"></div>
<svg style="left:309.5px;top:616.5px" width="11" height="11" viewBox="0 0 11 11"><path d="M2.500 3.500q0-2 3.500-2.200q3.500 0.200 3.500 2.200v3.500l-3.500 1.500l-3.500-1.500z" fill="#8ec4e8" stroke="#3a6a9a" stroke-width="0.600"/><path d="M0.800 6.500l3.500-1.300l3.500 1.300v2.500l-3.500 1.500l-3.500-1.500z" fill="#f0c088" stroke="#a8703a" stroke-width="0.600"/><path d="M0.800 6.500l3.500 1.400l3.500-1.400M4.300 7.900v2.600" fill="none" stroke="#a8703a" stroke-width="0.500"/></svg>
<div class="t " style="left:323px;top:617px;color:#3a3a4a;font-size:7.300px;letter-spacing:-0.200px">Planetary Gearbox*</div>
<div class="a" style="left:395.5px;top:615px;width:49px;height:14.5px;background:#fdfdfe;border:1px solid #7f9fbc;border-top:none"></div>
<svg style="left:397.5px;top:616.5px" width="11" height="11" viewBox="0 0 11 11"><path d="M1 5l4-3.500l5 1.500v4.500l-4 2.500l-5-1.500z" fill="#f5d8b0" stroke="#8a5a2a" stroke-width="0.900"/><path d="M3.500 5.500q2-2.500 4.500-0.500v2.500l-2 1.200l-2.500-0.800z" fill="#e8b070" stroke="#8a5a2a" stroke-width="0.700"/></svg>
<div class="t " style="left:411px;top:616.5px;font-weight:bold;color:#3a5a8a;font-size:7.800px;letter-spacing:-0.300px">设计1*</div>
<svg style="left:436px;top:619.5px" width="6" height="6" viewBox="0 0 6 6"><path d="M0.800 0.800l4 4M4.800 0.800l-4 4" stroke="#555" stroke-width="0.900"/></svg>
<svg style="left:1174px;top:619px" width="5" height="6" viewBox="0 0 5 6"><path d="M3.800 0.500v4.600l-3-2.300z" fill="none" stroke="#555" stroke-width="0.600"/></svg>
<svg style="left:1182px;top:619px" width="5" height="6" viewBox="0 0 5 6"><path d="M1.200 0.500v4.600l3-2.300z" fill="none" stroke="#555" stroke-width="0.600"/></svg>
<svg style="left:1191px;top:619px" width="6" height="6" viewBox="0 0 6 6"><path d="M0.600 0.600l4.200 4.200M4.800 0.600l-4.200 4.200" stroke="#444" stroke-width="0.800"/></svg>
<div class="a" style="left:0px;top:630.5px;width:1200px;height:19.5px;background:#2b5b8c"></div>
<div class="t w" style="left:6px;top:636.5px;font-size:6.820px;font-weight:500">选中并拖动一个面进行偏移。选中并拖动一条边将其变成圆角。</div>
<div class="a" style="left:672.6px;top:633.5px;width:1px;height:15px;background:#54799f"></div>
<div class="a" style="left:767.6px;top:633.5px;width:1px;height:15px;background:#54799f"></div>
<div class="a" style="left:790.6px;top:633.5px;width:1px;height:15px;background:#54799f"></div>
<div class="a" style="left:885.2px;top:633.5px;width:1px;height:15px;background:#54799f"></div>
<div class="a" style="left:772.5px;top:636.5px;width:8px;height:8px;background:#fff;border-radius:50%"></div>
<div class="t c" style="left:772.5px;top:635.5px;width:8px;color:#2b5b8c;font-weight:bold;font-size:7.500px;font-family:'Liberation Serif',serif">i</div>
<svg style="left:783.5px;top:639.5px" width="4" height="3" viewBox="0 0 4 3"><path d="M0 2.600l2-2.400l2 2.400z" fill="#fff"/></svg>
<svg style="left:1031.5px;top:635.5px" width="5" height="11" viewBox="0 0 5 11"><path d="M0.300 4l2.200-3.200l2.200 3.200zM0.300 7l2.200 3.200l2.200-3.200z" fill="#4f749c"/></svg>
<svg style="left:1042px;top:635.5px" width="12" height="11" viewBox="0 0 12 11"><path d="M1 1.500v7l1.800-1.500l1.200 2.600l1.100-0.500l-1.200-2.500h2.300z" fill="#fff"/><path d="M7 2q3-1.500 4 1.500q0.300 2.500-2 4" fill="none" stroke="#5aa8f0" stroke-width="1.300"/><path d="M6 0.500l0.500 3.200l2.600-1.800z" fill="#5aa8f0"/></svg>
<svg style="left:1058px;top:636px" width="8" height="10" viewBox="0 0 8 10"><path d="M1 0.800v7.400l1.900-1.600l1.300 2.800l1.200-0.600l-1.300-2.700h2.500z" fill="#fff"/></svg>
<svg style="left:1069.5px;top:639.5px" width="4" height="3" viewBox="0 0 4 3"><path d="M0 2.600l2-2.400l2 2.400z" fill="#fff"/></svg>
<svg style="left:1078.5px;top:636px" width="11" height="10" viewBox="0 0 11 10"><rect x="0.800" y="1" width="8.800" height="7.600" fill="none" stroke="#6ab0f4" stroke-width="1.100" stroke-dasharray="2 1.200"/></svg>
<svg style="left:1091px;top:639.5px" width="4" height="3" viewBox="0 0 4 3"><path d="M0 2.600l2-2.400l2 2.400z" fill="#fff"/></svg>
<div class="a" style="left:1098px;top:633.5px;width:1px;height:15px;background:#54799f"></div>
<svg style="left:1101.5px;top:635.5px" width="11" height="11" viewBox="0 0 11 11"><path d="M5.500 0.800v9.400" stroke="#5aa8f0" stroke-width="1"/><path d="M1.300 4.800c0-1.500 8.400-1.500 8.400 0.300c0 1.400-3.800 1.800-5.900 1.200" fill="none" stroke="#5aa8f0" stroke-width="1.200"/><path d="M0.200 3.300l2.800 0.400l-1.700 2.200z" fill="#5aa8f0"/><path d="M4.200 5l1.400 3.200l-2.600-0.600z" fill="#5aa8f0"/></svg>
<svg style="left:1114.5px;top:639.5px" width="4" height="3" viewBox="0 0 4 3"><path d="M0 2.600l2-2.400l2 2.400z" fill="#fff"/></svg>
<svg style="left:1122.5px;top:635.5px" width="11" height="11" viewBox="0 0 11 11"><path d="M5.500 1.500v8M1.500 5.500h8" stroke="#5aa8f0" stroke-width="1.100"/><path d="M5.500 0l1.700 2.200h-3.400zM5.500 11l1.700-2.200h-3.400zM0 5.500l2.200-1.700v3.400zM11 5.500l-2.200-1.700v3.400z" fill="#5aa8f0"/></svg>
<svg style="left:1138px;top:635.5px" width="11" height="11" viewBox="0 0 11 11"><circle cx="4.500" cy="4.500" r="3.600" fill="#fff"/><path d="M7 7l3 3" stroke="#fff" stroke-width="1.900" stroke-linecap="round"/></svg>
<svg style="left:1151.5px;top:639.5px" width="4" height="3" viewBox="0 0 4 3"><path d="M0 2.600l2-2.400l2 2.400z" fill="#fff"/></svg>
<svg style="left:1159.5px;top:636px" width="11" height="10" viewBox="0 0 11 10"><path d="M10.500 1.500l-6 4.300" stroke="#4a9af4" stroke-width="2.200"/><path d="M0.500 8.500l2.300-5.200l3.500 4.500z" fill="#4a9af4"/></svg>
<svg style="left:1174.5px;top:636px" width="11" height="10" viewBox="0 0 11 10"><path d="M0.500 8l6-4.300" stroke="#6f87a4" stroke-width="2.200"/><path d="M10.500 1l-2.300 5.200l-3.500-4.500z" fill="#6f87a4"/></svg>
<div class="a" style="left:0px;top:650px;width:1200px;height:25px;background:#d0dae3"></div>
<svg style="left:10px;top:657px" width="10" height="10" viewBox="0 0 10 10"><path d="M0 1.400l4.300-0.600v4h-4.300zM4.900 0.700l5.100-0.700v4.800h-5.100zM0 5.400h4.300v4l-4.300-0.600zM4.900 5.400h5.100v4.600l-5.100-0.700z" fill="#111"/></svg>
<div class="a" style="left:30.5px;top:650.5px;width:212.5px;height:24px;background:#fff;border:1px solid #e8ecf0"></div>
<svg style="left:37.3px;top:656.8px" width="11" height="11" viewBox="0 0 11 11"><circle cx="6.800" cy="4" r="3.300" fill="none" stroke="#222" stroke-width="0.900"/><path d="M4.400 6.500l-3.900 4.200" stroke="#222" stroke-width="0.900"/></svg>
<div class="t " style="left:55px;top:657px;font-size:8.850px;line-height:12px;height:12px;color:#2a2a2a">在这里输入你要搜索的内容</div>
<svg style="left:254.5px;top:657.5px" width="10" height="10" viewBox="0 0 10 10"><circle cx="5" cy="5" r="4" fill="none" stroke="#111" stroke-width="1.300"/></svg>
<svg style="left:284.5px;top:657px" width="11" height="10" viewBox="0 0 11 10"><rect x="1.300" y="2.200" width="5.600" height="5.600" fill="none" stroke="#222" stroke-width="1.100"/><path d="M0.300 1.700h7.600M0.300 8.300h7.600" stroke="#222" stroke-width="0.900"/><path d="M9.600 0.800v8.400" stroke="#666" stroke-width="0.800"/><rect x="8.900" y="4" width="1.500" height="1.700" fill="#111"/></svg>
<svg style="left:314.5px;top:656px" width="14" height="12" viewBox="0 0 14 12"><path d="M0.500 1.200q0-0.700 0.700-0.700h4.300l1 1.200h-6z" fill="#e0a41a"/><path d="M0.500 1.700h12.300q0.700 0 0.700 0.700v8.600q0 0.700-0.700 0.700h-11.600q-0.700 0-0.700-0.700z" fill="#fdd45a"/><path d="M0.500 5h13v6q0 0.700-0.700 0.700h-11.600q-0.700 0-0.700-0.700z" fill="#f8c83c"/><path d="M3.300 11.700v-4.400q0-0.700 0.700-0.700h6q0.700 0 0.700 0.700v4.400h-1.800v-3.200h-3.800v3.200z" fill="#2a8ae8"/></svg>
<div class="a" style="left:309.2px;top:673.5px;width:25.0px;height:1.5px;background:#0a6cdc"></div>
<svg style="left:344px;top:654.5px" width="16" height="16" viewBox="0 0 16 16"><defs><linearGradient id="ag" x1="0" y1="0" x2="1" y2="1"><stop offset="0" stop-color="#ffe45a"/><stop offset="0.500" stop-color="#ffc61a"/><stop offset="1" stop-color="#ffb400"/></linearGradient></defs><rect x="0.300" y="0.300" width="15.400" height="15.400" rx="3.200" fill="url(#ag)"/><path d="M6.300 0.500h3.600l5 13.500l-2.500 1.500l-4.300-11.500l-4.300 11.500l-2.600-1.500z" fill="#1c1a1e"/></svg>
<div class="a" style="left:368px;top:650px;width:30px;height:25px;background:#e4ebf2"></div>
<svg style="left:375.5px;top:655px" width="15" height="15" viewBox="0 0 15 15"><defs><linearGradient id="wg" x1="0" y1="0" x2="1" y2="0"><stop offset="0" stop-color="#8f8f8f"/><stop offset="0.500" stop-color="#b4b4b4"/><stop offset="1" stop-color="#c8c8c8"/></linearGradient></defs><rect width="15" height="15" fill="url(#wg)"/><path d="M6 0h3l4.500 15h-3l-3-10l-3 10h-3z" fill="#a4a4a4" opacity="0.700"/><text x="7.500" y="10.300" font-size="6.800" font-weight="bold" fill="#fff" text-anchor="middle" font-family="Liberation Sans, sans-serif">WB</text></svg>
<div class="a" style="left:368px;top:673.5px;width:30px;height:1.5px;background:#0a6cdc"></div>
<svg style="left:405.5px;top:654.5px" width="16" height="16" viewBox="0 0 16 16"><defs><linearGradient id="eg1" x1="0" y1="0" x2="1" y2="0"><stop offset="0" stop-color="#2a9ae0"/><stop offset="0.600" stop-color="#3ac0a0"/><stop offset="1" stop-color="#6ad850"/></linearGradient><linearGradient id="eg2" x1="0" y1="0" x2="0" y2="1"><stop offset="0" stop-color="#1a7ad0"/><stop offset="1" stop-color="#0a4aa8"/></linearGradient></defs><circle cx="8" cy="8" r="7.600" fill="url(#eg2)"/><path d="M0.600 6.500q1.500-6 7.600-6q6.500 0.300 7.400 6.500q0 3.500-3.500 3.800q-2.500 0-2.800-1.300q1.200-1 0.800-2.500q-0.800-2-3.300-2q-3.800 0.200-6.200 1.500z" fill="url(#eg1)"/><path d="M6 8.500q0.300-2 2.500-2q1.800 0.300 1.500 2q-0.400 1.500 1 2.300q2 0.500 3.500-0.500q-1.500 3-5 2.800q-3.500-0.800-3.500-4.600z" fill="#d0dae3"/><path d="M0.500 8q0.500-3.500 4.500-4.300q-2.500 2-1.500 6q1.500 4.500 6.500 5.500q-4.500 1.200-8-2.500q-1.500-2-1.500-4.700z" fill="#1a6ac8"/></svg>
<div class="a" style="left:401.3px;top:673.5px;width:24.5px;height:1.5px;background:#0a6cdc"></div>
<svg style="left:438.5px;top:656.5px" width="12" height="12" viewBox="0 0 12 12"><path d="M0.500 4q3 0 5-1.500t5.500-2v8q-3 0.500-5 2t-5.500 1.500z" fill="#4a5274"/><path d="M0.500 6.700q3 0 5-1.500t5.500-2M0.500 9.300q3 0 5-1.500t5.500-2M3 3.800v8M5.500 2.500v8M8.300 1.200v8" stroke="#8a92b0" stroke-width="0.500" fill="none"/></svg>
<svg style="left:466.5px;top:655px" width="17" height="16" viewBox="0 0 17 16"><ellipse cx="8" cy="6" rx="7.300" ry="4.300" transform="rotate(-22 8 6)" fill="#f8f8fa" stroke="#e85a5a" stroke-width="0.900"/><path d="M3.500 5.500l7 4.500M8 2.800l1.800 7" stroke="#8a8a8a" stroke-width="0.800"/><circle cx="9" cy="12.800" r="1.600" fill="none" stroke="#2a8ae8" stroke-width="1.100"/><circle cx="12.300" cy="10.700" r="1.600" fill="none" stroke="#2a8ae8" stroke-width="1.100"/></svg>
<svg style="left:498px;top:655px" width="15" height="15" viewBox="0 0 15 15"><rect width="15" height="15" rx="3.200" fill="#f5161c"/><text x="7.500" y="9.600" font-size="5.800" font-weight="bold" fill="#fff" text-anchor="middle" font-family="Liberation Sans, Noto Sans CJK SC, sans-serif" letter-spacing="-0.300">有道</text></svg>
<div class="a" style="left:493px;top:673.5px;width:25px;height:1.5px;background:#0a6cdc"></div>
<svg style="left:528.8px;top:655px" width="15.5" height="15" viewBox="0 0 15.5 15"><rect width="15.500" height="15" fill="#107a8c"/><path d="M2.200 0v10.800h3.200M4.200 0v8.700h3.400v4.300h-7.600M6.300 2.200h9.200M6.300 4.300h3.200v10.700M11.600 4.300v10.700M11.600 4.300h3.900M13.700 8.500v3.300h1.800" stroke="#e8f4f6" stroke-width="0.750" fill="none"/></svg>
<svg style="left:561.3px;top:655.2px" width="11.4" height="14.6" viewBox="0 0 11.4 14.6"><rect width="11.400" height="14.600" rx="0.800" fill="#76828e"/><rect x="1" y="1" width="9.400" height="3" fill="#38d0fa"/><g fill="#f4f6f8"><rect x="1.200" y="5.300" width="2.400" height="2.200"/><rect x="4.500" y="5.300" width="2.400" height="2.200"/><rect x="7.800" y="5.300" width="2.400" height="2.200"/><rect x="1.200" y="8.400" width="2.400" height="2.200"/><rect x="4.500" y="8.400" width="2.400" height="2.200"/><rect x="1.200" y="11.500" width="2.400" height="2.200"/><rect x="4.500" y="11.500" width="2.400" height="2.200"/></g><rect x="7.800" y="8.400" width="2.400" height="5.300" fill="#0c3a8c"/></svg>
<svg style="left:591.5px;top:655.5px" width="12" height="13.5" viewBox="0 0 12 13.5"><defs><linearGradient id="lg" x1="0" y1="0" x2="0" y2="1"><stop offset="0" stop-color="#d4d4d4"/><stop offset="1" stop-color="#a8a8a8"/></linearGradient></defs><rect width="12" height="13.500" rx="1.800" fill="url(#lg)"/><text x="6" y="6" font-size="5.600" fill="#2a2a2a" text-anchor="middle" font-family="Liberation Sans, sans-serif" letter-spacing="0.400">LS</text><text x="6" y="11.600" font-size="5.600" font-weight="bold" fill="#3a3a3a" text-anchor="middle" font-family="Liberation Sans, sans-serif">PP</text></svg>
<svg style="left:620px;top:656.5px" width="16" height="12" viewBox="0 0 16 12"><rect x="0.800" y="0.800" width="14.400" height="8.400" rx="0.600" fill="#fdfdfd" stroke="#8c8c8c" stroke-width="1"/><path d="M6.400 3v1.300M9.400 3v1.300" stroke="#8a8a8a" stroke-width="0.600"/><path d="M6.600 5.800q1.400 1 2.800 0" fill="none" stroke="#8a8a8a" stroke-width="0.500"/><path d="M6.800 9.300h2.400v1.300h-2.400z" fill="#9a9a9a"/><path d="M4.300 10.900h7.400" stroke="#8c8c8c" stroke-width="0.900"/></svg>
<svg style="left:651px;top:654.5px" width="15" height="15" viewBox="0 0 15 15"><circle cx="7.500" cy="7.500" r="7.200" fill="#f4f4f4" stroke="#c8ccd0" stroke-width="0.400"/><circle cx="7.500" cy="7.500" r="6" fill="#141414"/><circle cx="7.500" cy="7.500" r="3.800" fill="#f5392c"/></svg>
<div class="a" style="left:646.3px;top:673.5px;width:24.5px;height:1.5px;background:#0a6cdc"></div>
<svg style="left:682px;top:655.5px" width="15" height="14" viewBox="0 0 15 14"><path d="M2.500 8.200l5 3.300l5-3.300v2.200l-5 3.200l-5-3.200z" fill="#6d8cf8"/><path d="M0.300 5.200l7.200-4.900l7.200 4.900l-7.200 4.900z" fill="#2db9f9"/><path d="M6.200 3.300l3.300 1.900l-3.300 1.900z" fill="#fff"/></svg>
<svg style="left:711.5px;top:656.5px" width="16.5" height="12" viewBox="0 0 16.5 12"><defs><linearGradient id="pg" x1="0" y1="0" x2="0" y2="1"><stop offset="0" stop-color="#f8301a"/><stop offset="1" stop-color="#ff6a1a"/></linearGradient></defs><path d="M0.500 0.500h3.300l2.200 7.300l2-5l-0.700-2.300h3.200l-3.300 11h-3.200zM9.300 7.500l2.200-7h4.700l-3.700 11h-3.200l1.100-3.600z" fill="url(#pg)"/><path d="M12 2.200h2l-2.300 6.800z" fill="#fff" opacity="0.850"/></svg>
<div class="a" style="left:707px;top:673.5px;width:25px;height:1.5px;background:#0a6cdc"></div>
<div class="a" style="left:735.5px;top:650px;width:30.299999999999955px;height:25px;background:#e4ebf2"></div>
<svg style="left:743px;top:655px" width="15" height="15" viewBox="0 0 15 15"><rect width="15" height="15" fill="#1212ea"/><path d="M6 0h3l4.500 15h-3l-3-10l-3 10h-3z" fill="#4a5af4" opacity="0.800"/><text x="7.500" y="10.400" font-size="7.400" font-weight="bold" fill="#fff" text-anchor="middle" font-family="Liberation Sans, sans-serif">SC</text></svg>
<div class="a" style="left:735.5px;top:673.5px;width:30.299999999999955px;height:1.5px;background:#0a6cdc"></div>
<svg style="left:774px;top:655px" width="15" height="15" viewBox="0 0 15 15"><defs><linearGradient id="mg" x1="0" y1="0" x2="1" y2="1"><stop offset="0" stop-color="#6a3a7a"/><stop offset="1" stop-color="#4a2058"/></linearGradient></defs><rect width="15" height="15" fill="url(#mg)"/><path d="M6 0h3l4.500 15h-3l-3-10l-3 10h-3z" fill="#9a6aa8" opacity="0.600"/><text x="7.500" y="10.500" font-size="7.800" font-weight="bold" fill="#fff" text-anchor="middle" font-family="Liberation Sans, sans-serif">M</text></svg>
<div class="a" style="left:768.8px;top:673.5px;width:24.5px;height:1.5px;background:#0a6cdc"></div>
<div class="t c " style="left:841.0px;top:652.5px;width:40px;font-size:7.600px;color:#222">1%</div>
<div class="t c " style="left:836.0px;top:663px;width:50px;font-size:7.600px;color:#222">CPU使用</div>
<svg style="left:942px;top:656.3px" width="12" height="12" viewBox="0 0 12 12"><defs><radialGradient id="sun" cx="0.350" cy="0.350" r="0.800"><stop offset="0" stop-color="#ffe04a"/><stop offset="0.600" stop-color="#ffc21a"/><stop offset="1" stop-color="#f58a1a"/></radialGradient></defs><circle cx="6" cy="6" r="5.900" fill="url(#sun)"/></svg>
<div class="t " style="left:960.8px;top:656.5px;font-size:9.300px;line-height:12px;height:12px;color:#222;letter-spacing:-0.300px">30°C</div>
<div class="t " style="left:985.6px;top:656.8px;font-size:8.600px;line-height:12px;height:12px;color:#222">晴朗</div>
<svg style="left:1013.5px;top:659px" width="8" height="5" viewBox="0 0 8 5"><path d="M0.600 4.400l3.400-3.600l3.400 3.600" fill="none" stroke="#222" stroke-width="0.900"/></svg>
<svg style="left:1028.5px;top:657px" width="7" height="11" viewBox="0 0 7 11"><rect x="1.700" y="0.300" width="3.600" height="6.800" rx="1.500" fill="#222"/><path d="M0.500 5q0 3.300 3 3.300q3 0 3-3.300M3.500 8.300v2M2 10.400h3" fill="none" stroke="#444" stroke-width="0.700"/></svg>
<svg style="left:1041.5px;top:657.5px" width="11" height="10" viewBox="0 0 11 10"><path d="M0.500 3.500h2l2.500-2.500v8l-2.500-2.500h-2z" fill="none" stroke="#222" stroke-width="0.800"/><path d="M6.300 3.300q1.200 1.700 0 3.400M7.800 2.200q2 2.800 0 5.600M9.300 1.200q2.700 3.800 0 7.600" fill="none" stroke="#555" stroke-width="0.600"/></svg>
<svg style="left:1058px;top:657.5px" width="9" height="10" viewBox="0 0 9 10"><path d="M0.500 0.500h3.300v8.500l-3.300-1.500z" fill="#1a1a1a"/><path d="M4.500 0.500h3.300v3.500h-3.300z" fill="#1a1a1a"/><path d="M4.500 4.600h2v2h-2z" fill="#1a1a1a"/><circle cx="6.800" cy="7.400" r="2" fill="#e83a2a"/><path d="M5.800 7.400h2" stroke="#fff" stroke-width="0.600"/></svg>
<svg style="left:1071.5px;top:657.5px" width="12" height="10" viewBox="0 0 12 10"><rect x="3" y="1" width="8.300" height="5.600" fill="none" stroke="#222" stroke-width="0.800"/><path d="M7 6.600v2M4.500 8.800h5.500" stroke="#222" stroke-width="0.800"/><rect x="0.500" y="0.500" width="3.400" height="5" fill="#d0dae3" stroke="#222" stroke-width="0.700"/><path d="M1.300 2h1.800M1.300 3.500h1.800" stroke="#222" stroke-width="0.500"/></svg>
<div class="t " style="left:1087.5px;top:656.5px;font-size:9px;line-height:12px;height:12px;color:#9aa2aa">中</div>
<svg style="left:1104.5px;top:656.5px" width="11" height="11" viewBox="0 0 11 11"><path d="M2 0.500h8l-0.700 7.300q-0.200 2.200-2.300 2.200h-6l0.700-7.300q0.200-2.200 2.300-2.200z" fill="#f4561a"/><text x="5.500" y="8.200" font-size="7.500" font-weight="bold" fill="#fff" text-anchor="middle" font-family="Liberation Sans, sans-serif">S</text></svg>
<div class="t c " style="left:1119.0px;top:651.5px;width:50px;font-size:8px;line-height:10px;color:#222">12:17</div>
<div class="t c " style="left:1119.0px;top:663.5px;width:50px;font-size:8px;line-height:10px;color:#222">2021/8/4</div>
<svg style="left:1173.5px;top:657.5px" width="12" height="12" viewBox="0 0 12 12"><path d="M0.800 0.800h10.400v7.600h-4.200l-1.500 1.900l-1.400-1.900h-3.300z" fill="none" stroke="#222" stroke-width="0.900"/></svg>
</div></body></html>
